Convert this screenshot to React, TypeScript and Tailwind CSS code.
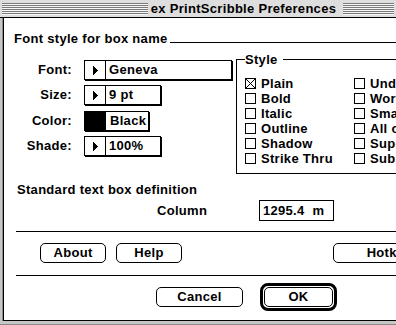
import React from "react";

const Tri = () => (
  <svg width="5" height="9" viewBox="0 0 5 9" shapeRendering="crispEdges" fill="#000">
    <rect x="0" y="0" width="1" height="9" />
    <rect x="1" y="1" width="1" height="7" />
    <rect x="2" y="2" width="1" height="5" />
    <rect x="3" y="3" width="1" height="3" />
    <rect x="4" y="4" width="1" height="1" />
  </svg>
);

const Stripes = ({ className }: { className: string }) => (
  <div className={`flex flex-col self-start pt-[3px] ${className}`}>
    {[0, 1, 2, 3, 4, 5].map((i) => (
      <div key={i} className="flex flex-col">
        <div className="h-px bg-[#7a7a7a]" />
        <div className="h-px bg-[#f6f6f6]" />
      </div>
    ))}
  </div>
);

const Popup = ({ w, text }: { w: string; text: string }) => (
  <div className={`flex h-[20px] border border-black bg-white shadow-[1px_1px_0_0_#000] ${w}`}>
    <div className="flex w-[21px] items-center justify-center border-r border-black pl-px">
      <Tri />
    </div>
    <div className="flex items-center pl-[3px] leading-[14px]">{text}</div>
  </div>
);

const Check = ({ label, checked }: { label: string; checked?: boolean }) => (
  <div className="flex h-[15px] items-center whitespace-nowrap">
    <svg width="11" height="11" viewBox="0 0 11 11" shapeRendering="crispEdges" className="shrink-0">
      <rect x="0.5" y="0.5" width="10" height="10" fill="#fff" stroke="#000" />
      {checked && (
        <g stroke="#000" strokeWidth="1" shapeRendering="auto">
          <line x1="1" y1="1" x2="10" y2="10" />
          <line x1="10" y1="1" x2="1" y2="10" />
        </g>
      )}
    </svg>
    <span className="ml-[5px] leading-[14px]">{label}</span>
  </div>
);

const Button = ({ w, text }: { w: string; text: string }) => (
  <div className={`flex h-[20px] shrink-0 items-center justify-center rounded-[5px] border border-black bg-white leading-[14px] ${w}`}>
    {text}
  </div>
);

export default function App() {
  return (
    <div
      className="relative h-[325px] w-[396px] overflow-hidden bg-white text-[13px] font-bold tracking-[0.3px] text-black"
      style={{ fontFamily: '"Liberation Sans", Arial, sans-serif' }}
    >
      {/* Title bar */}
      <div className="flex h-[18px] items-start border-b border-black bg-[#dedede]">
        <Stripes className="ml-[2px] w-[146px]" />
        <div className="flex h-[17px] w-[195px] items-center justify-center pr-[4px] leading-[14px] whitespace-nowrap">
          ex PrintScribble Preferences
        </div>
        <Stripes className="w-[51px]" />
      </div>

      {/* Middle */}
      <div className="flex h-[303px]">
        <div className="flex w-[4px] shrink-0">
          <div className="w-[2px] bg-[#c6c6c6]" />
          <div className="w-px bg-[#8e8e8e]" />
          <div className="w-px bg-black" />
        </div>
        <div className="flex w-[480px] shrink-0 flex-col border-b border-black bg-white">
          {/* Header */}
          <div className="ml-[10px] mt-[14px] flex h-[14px]">
            <span className="leading-[14px] whitespace-nowrap">Font style for box name</span>
            <div className="ml-[2px] mt-[10px] h-px flex-1 self-start bg-black" />
          </div>

          {/* Main */}
          <div className="mt-[7px] flex">
            <div className="flex w-[232px] shrink-0 flex-col pt-[7px]">
              <div className="flex h-[21px] items-start">
                <div className="flex h-[20px] w-[68px] items-center justify-end leading-[14px]">Font:</div>
                <div className="ml-[12px]">
                  <Popup w="w-[148px]" text="Geneva" />
                </div>
              </div>
              <div className="mt-[4px] flex h-[21px] items-start">
                <div className="flex h-[20px] w-[68px] items-center justify-end leading-[14px]">Size:</div>
                <div className="ml-[12px]">
                  <Popup w="w-[77px]" text="9 pt" />
                </div>
              </div>
              <div className="mt-[5px] flex h-[21px] items-start">
                <div className="flex h-[20px] w-[68px] items-center justify-end leading-[14px]">Color:</div>
                <div className="ml-[12px] flex h-[20px] w-[65px] border border-black bg-white shadow-[1px_1px_0_0_#000]">
                  <div className="w-[21px] bg-black" />
                  <div className="flex items-center pl-[4px] leading-[14px]">Black</div>
                </div>
              </div>
              <div className="mt-[4px] flex h-[21px] items-start">
                <div className="flex h-[20px] w-[68px] items-center justify-end leading-[14px]">Shade:</div>
                <div className="ml-[12px]">
                  <Popup w="w-[77px]" text="100%" />
                </div>
              </div>
            </div>

            {/* Style group */}
            <div className="flex w-[230px] shrink-0 flex-col">
              <div className="flex h-[13px]">
                <div className="h-[7px] w-[9px] self-end border-l border-t border-black" />
                <span className="leading-[13px]">Style</span>
                <div className="ml-[5px] h-[7px] flex-1 self-end border-r border-t border-black" />
              </div>
              <div className="grid grid-cols-[109px_109px] border-b border-l border-r border-black pb-[7px] pl-[8px] pt-[10px]">
                <div className="flex flex-col">
                  <Check label="Plain" checked />
                  <Check label="Bold" />
                  <Check label="Italic" />
                  <Check label="Outline" />
                  <Check label="Shadow" />
                  <Check label="Strike Thru" />
                </div>
                <div className="flex flex-col">
                  <Check label="Underline" />
                  <Check label="Word underline" />
                  <Check label="Small caps" />
                  <Check label="All caps" />
                  <Check label="Superscript" />
                  <Check label="Subscript" />
                </div>
              </div>
            </div>
          </div>

          {/* Standard text box definition */}
          <div className="ml-[13px] mt-[9px] flex h-[14px] items-center leading-[14px] whitespace-nowrap">
            Standard text box definition
          </div>
          <div className="ml-[153px] mt-[3px] flex h-[21px] items-center">
            <div className="w-[102px] leading-[14px]">Column</div>
            <div className="flex h-[21px] w-[75px] items-center border border-black pl-[3px] leading-[14px] whitespace-pre">
              {"1295.4  m"}
            </div>
          </div>

          <div className="ml-[12px] mt-[10px] h-px bg-black" />

          <div className="ml-[36px] mt-[11px] flex h-[20px]">
            <Button w="w-[66px]" text="About" />
            <div className="ml-[10px]">
              <Button w="w-[66px]" text="Help" />
            </div>
            <div className="ml-[151px]">
              <Button w="w-[120px]" text="Hotkeys" />
            </div>
          </div>

          <div className="ml-[12px] mt-[12px] h-px bg-black" />

          <div className="ml-[152px] mt-[7px] flex h-[28px] items-center">
            <Button w="w-[87px]" text="Cancel" />
            <div className="ml-[17px] flex h-[28px] w-[77px] rounded-[8px] border-[3px] border-black p-px">
              <div className="flex h-[20px] flex-1 items-center justify-center rounded-[5px] border border-black leading-[14px]">
                OK
              </div>
            </div>
          </div>
        </div>
      </div>

      {/* Bottom frame */}
      <div className="h-[4px] border-b border-[#8a8a8a] bg-[#c6c6c6]" />
    </div>
  );
}
